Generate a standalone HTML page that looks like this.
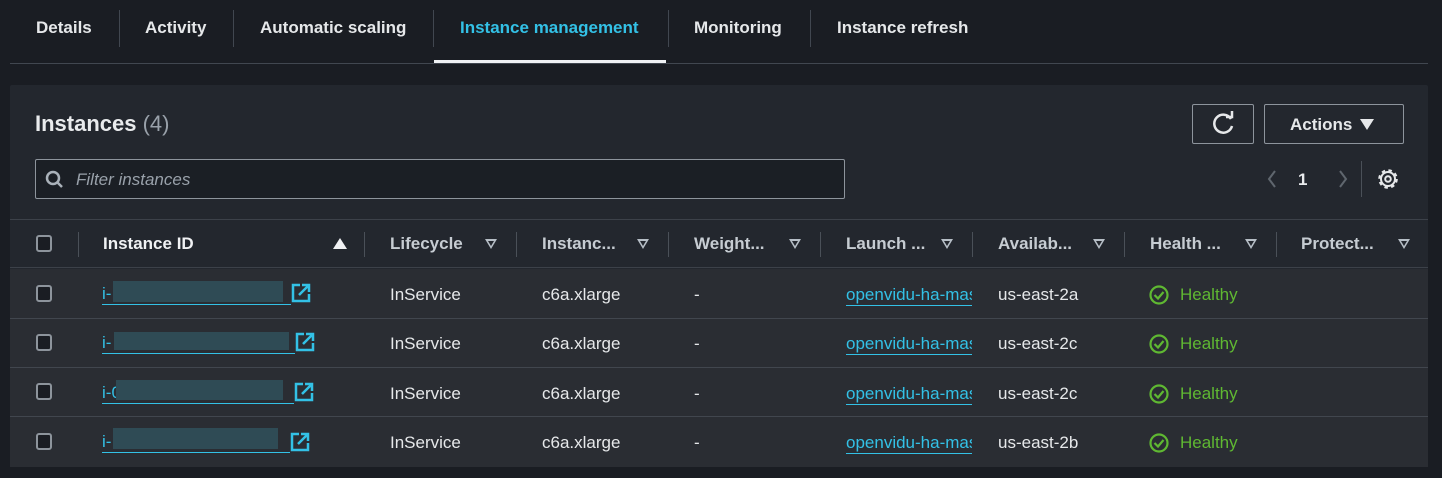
<!DOCTYPE html>
<html><head><style>
*{box-sizing:border-box;margin:0;padding:0}
body{width:1442px;height:478px;background:#1a1d23;font-family:"Liberation Sans",sans-serif;color:#e9ebed;position:relative;overflow:hidden}
.tab{position:absolute;top:18px;font-size:17px;font-weight:bold;color:#e6e8ea}
.tsep{position:absolute;top:10px;width:1px;height:37px;background:#414750}
.panel{position:absolute;left:10px;top:85px;width:1418px;height:382px;background:#23272e;border-radius:2px}
.hdr{position:absolute;left:0;top:134px;width:1418px;height:49px;border-top:1px solid #3c4149;border-bottom:1px solid #3c4149}
.row{position:absolute;left:0;width:1418px;height:49px;background:#2a2d33;border-bottom:1px solid #41464e}
.cb{position:absolute;left:26px;width:16px;height:17px;border:2px solid #8d949c;border-radius:3px;background:#1a1d23}
.t{position:absolute;font-size:17px;color:#e6e8ea}
.h{position:absolute;top:14px;font-size:17px;font-weight:bold;color:#c6ccd2}
.csep{position:absolute;top:12px;width:1px;height:25px;background:#4a5058}
.tri{position:absolute;top:19px;width:0;height:0;border-left:6px solid transparent;border-right:6px solid transparent;border-top:10px solid #b6bec6}
.tri:after{content:"";position:absolute;left:-3px;top:-8px;border-left:3px solid transparent;border-right:3px solid transparent;border-top:5px solid #23272e}
.lnk{position:absolute;color:#33c1e6;font-size:17px;border-bottom:1px solid #33c1e6}
.blk{position:absolute;background:#2f4b55}
.ok{position:absolute;color:#5fb832;font-size:17px}
.ok svg{position:absolute;left:-32px;top:-1px}
</style></head><body>
<div class="tab" style="left:36px">Details</div>
<div class="tsep" style="left:119px"></div>
<div class="tab" style="left:145px">Activity</div>
<div class="tsep" style="left:233px"></div>
<div class="tab" style="left:260px">Automatic scaling</div>
<div class="tsep" style="left:433px"></div>
<div class="tab" style="left:460px;color:#33c1e6">Instance management</div>
<div class="tsep" style="left:668px"></div>
<div class="tab" style="left:694px">Monitoring</div>
<div class="tsep" style="left:810px"></div>
<div class="tab" style="left:837px">Instance refresh</div>
<div style="position:absolute;left:10px;top:63px;width:1418px;height:1px;background:#414750"></div>
<div style="position:absolute;left:434px;top:60px;width:232px;height:3px;background:#f0f2f4"></div>

<div class="panel">
<div style="position:absolute;left:25px;top:26px;font-size:22px;font-weight:bold;color:#e9ebed">Instances <span style="font-weight:normal;color:#99a1aa">(4)</span></div>
<div style="position:absolute;left:1182px;top:19px;width:62px;height:40px;border:1px solid #8d949c;border-radius:2px"><svg width="62" height="40" style="position:absolute;left:-1px;top:-1px"><path d="M39 15 A9 9 0 1 0 40 22" fill="none" stroke="#e6e8ea" stroke-width="2.5"/><path d="M34 13 L40 13 L40 7" fill="none" stroke="#e6e8ea" stroke-width="2.5"/></svg></div>
<div style="position:absolute;left:1254px;top:19px;width:140px;height:40px;border:1px solid #8d949c;border-radius:2px;font-size:17px;font-weight:bold;color:#e6e8ea;padding:10px 0 0 25px">Actions<span style="position:absolute;left:95px;top:14px;border-left:7px solid transparent;border-right:7px solid transparent;border-top:11px solid #e6e8ea"></span></div>
<div style="position:absolute;left:25px;top:74px;width:810px;height:40px;border:1px solid #8d949c;border-radius:2px;background:#1b1f25">
<svg width="22" height="22" style="position:absolute;left:8px;top:9px"><circle cx="9" cy="9" r="6" fill="none" stroke="#aab2ba" stroke-width="2.5"/><path d="M13 13 L18 18" stroke="#aab2ba" stroke-width="2.5"/></svg>
<span style="position:absolute;left:40px;top:10px;font-size:17px;font-style:italic;color:#99a1aa">Filter instances</span></div>
<svg width="120" height="40" style="position:absolute;left:1248px;top:74px"><path d="M17 12 L11 20 L17 28" fill="none" stroke="#5f666e" stroke-width="2"/><path d="M82 12 L88 20 L82 28" fill="none" stroke="#5f666e" stroke-width="2"/><rect x="103" y="2" width="1" height="36" fill="#4a5058"/></svg>
<div style="position:absolute;left:1288px;top:85px;font-size:17px;font-weight:bold">1</div>
<svg width="24" height="24" style="position:absolute;left:1366px;top:82px"><circle cx="12" cy="12" r="8.5" fill="none" stroke="#e6e8ea" stroke-width="2.6" stroke-dasharray="3.4 3.3"/><circle cx="12" cy="12" r="7" fill="none" stroke="#e6e8ea" stroke-width="2"/><circle cx="12" cy="12" r="2.8" fill="none" stroke="#e6e8ea" stroke-width="2"/></svg>

<div class="hdr">
<div class="cb" style="top:15px"></div>
<div class="csep" style="left:68px"></div>
<div class="h" style="left:93px;color:#f0f2f4">Instance ID</div>
<div style="position:absolute;left:323px;top:18px;border-left:7px solid transparent;border-right:7px solid transparent;border-bottom:11px solid #f0f2f4"></div>
<div class="csep" style="left:354px"></div><div class="h" style="left:380px">Lifecycle</div><div class="tri" style="left:475px"></div>
<div class="csep" style="left:506px"></div><div class="h" style="left:532px">Instanc...</div><div class="tri" style="left:627px"></div>
<div class="csep" style="left:658px"></div><div class="h" style="left:684px">Weight...</div><div class="tri" style="left:779px"></div>
<div class="csep" style="left:810px"></div><div class="h" style="left:836px">Launch ...</div><div class="tri" style="left:931px"></div>
<div class="csep" style="left:962px"></div><div class="h" style="left:988px">Availab...</div><div class="tri" style="left:1083px"></div>
<div class="csep" style="left:1114px"></div><div class="h" style="left:1140px">Health ...</div><div class="tri" style="left:1235px"></div>
<div class="csep" style="left:1266px"></div><div class="h" style="left:1291px">Protect...</div><div class="tri" style="left:1388px"></div>
</div>

<div class="row" style="top:184px;height:50px"><div class="cb" style="top:16px"></div><div class="lnk" style="left:92px;top:15px;width:189px">i-</div><div class="blk" style="left:103px;top:12px;width:170px;height:21px"></div>
<svg width="20" height="20" style="position:absolute;left:281px;top:14px"><path d="M9 2H2V18H18V11" fill="none" stroke="#33c1e6" stroke-width="2.5"/><path d="M8 12L17 3M11 2H18V9" fill="none" stroke="#33c1e6" stroke-width="2.5"/></svg>
<div class="t" style="left:380px;top:16px">InService</div><div class="t" style="left:532px;top:16px">c6a.xlarge</div><div class="t" style="left:684px;top:16px">-</div>
<div class="lnk" style="left:836px;top:16px;width:126px;overflow:hidden;white-space:nowrap">openvidu-ha-master</div><div class="t" style="left:988px;top:16px">us-east-2a</div>
<div class="ok" style="left:1170px;top:16px"><svg width="22" height="22"><circle cx="11" cy="11" r="8.5" fill="none" stroke="#5fb832" stroke-width="2.2"/><path d="M6.5 11L10 14.5L15.5 8" fill="none" stroke="#5fb832" stroke-width="2.2"/></svg>Healthy</div></div>

<div class="row" style="top:234px"><div class="cb" style="top:15px"></div><div class="lnk" style="left:92px;top:14px;width:193px">i-</div><div class="blk" style="left:104px;top:13px;width:175px;height:18px"></div>
<svg width="20" height="20" style="position:absolute;left:285px;top:13px"><path d="M9 2H2V18H18V11" fill="none" stroke="#33c1e6" stroke-width="2.5"/><path d="M8 12L17 3M11 2H18V9" fill="none" stroke="#33c1e6" stroke-width="2.5"/></svg>
<div class="t" style="left:380px;top:15px">InService</div><div class="t" style="left:532px;top:15px">c6a.xlarge</div><div class="t" style="left:684px;top:15px">-</div>
<div class="lnk" style="left:836px;top:15px;width:126px;overflow:hidden;white-space:nowrap">openvidu-ha-master</div><div class="t" style="left:988px;top:15px">us-east-2c</div>
<div class="ok" style="left:1170px;top:15px"><svg width="22" height="22"><circle cx="11" cy="11" r="8.5" fill="none" stroke="#5fb832" stroke-width="2.2"/><path d="M6.5 11L10 14.5L15.5 8" fill="none" stroke="#5fb832" stroke-width="2.2"/></svg>Healthy</div></div>

<div class="row" style="top:283px"><div class="cb" style="top:15px"></div><div class="lnk" style="left:92px;top:15px;width:192px">i-0&nbsp;&nbsp;&nbsp;&nbsp;&nbsp;&nbsp;&nbsp;&nbsp;&nbsp;&nbsp;&nbsp;&nbsp;&nbsp;&nbsp;&nbsp;&nbsp;&nbsp;&nbsp;&nbsp;&nbsp;&nbsp;&nbsp;&nbsp;&nbsp;&nbsp;&nbsp;&nbsp;&nbsp;&nbsp;&nbsp;&nbsp;&nbsp;7</div><div class="blk" style="left:106px;top:12px;width:167px;height:20px"></div>
<svg width="20" height="20" style="position:absolute;left:284px;top:14px"><path d="M9 2H2V18H18V11" fill="none" stroke="#33c1e6" stroke-width="2.5"/><path d="M8 12L17 3M11 2H18V9" fill="none" stroke="#33c1e6" stroke-width="2.5"/></svg>
<div class="t" style="left:380px;top:16px">InService</div><div class="t" style="left:532px;top:16px">c6a.xlarge</div><div class="t" style="left:684px;top:16px">-</div>
<div class="lnk" style="left:836px;top:16px;width:126px;overflow:hidden;white-space:nowrap">openvidu-ha-master</div><div class="t" style="left:988px;top:16px">us-east-2c</div>
<div class="ok" style="left:1170px;top:16px"><svg width="22" height="22"><circle cx="11" cy="11" r="8.5" fill="none" stroke="#5fb832" stroke-width="2.2"/><path d="M6.5 11L10 14.5L15.5 8" fill="none" stroke="#5fb832" stroke-width="2.2"/></svg>Healthy</div></div>

<div class="row" style="top:332px;height:50px;border-bottom:none"><div class="cb" style="top:16px"></div><div class="lnk" style="left:92px;top:15px;width:188px">i-</div><div class="blk" style="left:103px;top:11px;width:165px;height:21px"></div>
<svg width="20" height="20" style="position:absolute;left:280px;top:15px"><path d="M9 2H2V18H18V11" fill="none" stroke="#33c1e6" stroke-width="2.5"/><path d="M8 12L17 3M11 2H18V9" fill="none" stroke="#33c1e6" stroke-width="2.5"/></svg>
<div class="t" style="left:380px;top:16px">InService</div><div class="t" style="left:532px;top:16px">c6a.xlarge</div><div class="t" style="left:684px;top:16px">-</div>
<div class="lnk" style="left:836px;top:16px;width:126px;overflow:hidden;white-space:nowrap">openvidu-ha-master</div><div class="t" style="left:988px;top:16px">us-east-2b</div>
<div class="ok" style="left:1170px;top:16px"><svg width="22" height="22"><circle cx="11" cy="11" r="8.5" fill="none" stroke="#5fb832" stroke-width="2.2"/><path d="M6.5 11L10 14.5L15.5 8" fill="none" stroke="#5fb832" stroke-width="2.2"/></svg>Healthy</div></div>
</div>
</body></html>
